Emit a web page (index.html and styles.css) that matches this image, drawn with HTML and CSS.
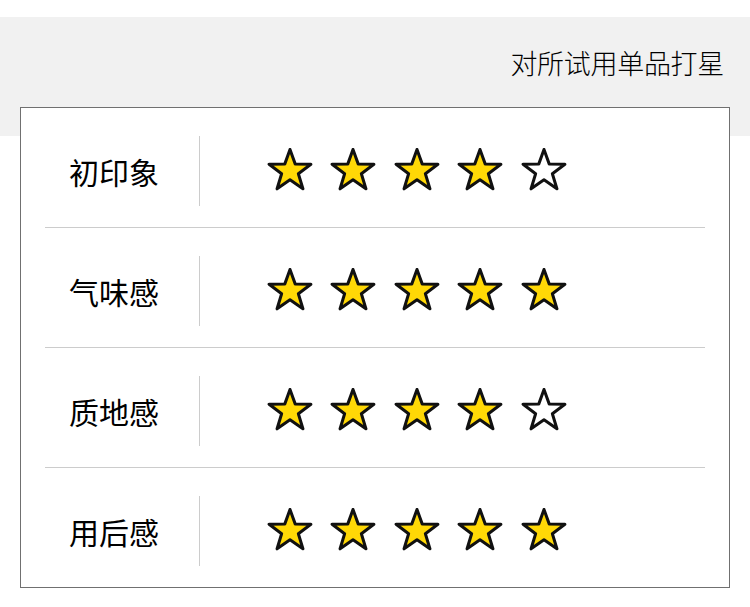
FILE: index.html
```html
<!DOCTYPE html>
<html lang="zh-CN">
<head>
<meta charset="utf-8">
<link rel="stylesheet" href="styles.css">
</head>
<body>
<svg width="0" height="0" class="defs">
  <defs>
    <polygon id="star" points="24,1.5 29.17,15.88 44.92,16.2 32.37,25.72 36.93,40.8 24,31.8 11.07,40.8 15.63,25.72 3.08,16.2 18.83,15.88"/>
  </defs>
</svg>
<div class="band">
  <div class="title">对所试用单品打星</div>
</div>
<div class="card">
  <div class="row">
    <div class="label">初印象</div>
    <div class="stars">
      <svg class="star on" viewBox="0 0 48 46"><use href="#star"/></svg>
      <svg class="star on" viewBox="0 0 48 46"><use href="#star"/></svg>
      <svg class="star on" viewBox="0 0 48 46"><use href="#star"/></svg>
      <svg class="star on" viewBox="0 0 48 46"><use href="#star"/></svg>
      <svg class="star off" viewBox="0 0 48 46"><use href="#star"/></svg>
    </div>
  </div>
  <div class="row">
    <div class="label">气味感</div>
    <div class="stars">
      <svg class="star on" viewBox="0 0 48 46"><use href="#star"/></svg>
      <svg class="star on" viewBox="0 0 48 46"><use href="#star"/></svg>
      <svg class="star on" viewBox="0 0 48 46"><use href="#star"/></svg>
      <svg class="star on" viewBox="0 0 48 46"><use href="#star"/></svg>
      <svg class="star on" viewBox="0 0 48 46"><use href="#star"/></svg>
    </div>
  </div>
  <div class="row">
    <div class="label">质地感</div>
    <div class="stars">
      <svg class="star on" viewBox="0 0 48 46"><use href="#star"/></svg>
      <svg class="star on" viewBox="0 0 48 46"><use href="#star"/></svg>
      <svg class="star on" viewBox="0 0 48 46"><use href="#star"/></svg>
      <svg class="star on" viewBox="0 0 48 46"><use href="#star"/></svg>
      <svg class="star off" viewBox="0 0 48 46"><use href="#star"/></svg>
    </div>
  </div>
  <div class="row">
    <div class="label">用后感</div>
    <div class="stars">
      <svg class="star on" viewBox="0 0 48 46"><use href="#star"/></svg>
      <svg class="star on" viewBox="0 0 48 46"><use href="#star"/></svg>
      <svg class="star on" viewBox="0 0 48 46"><use href="#star"/></svg>
      <svg class="star on" viewBox="0 0 48 46"><use href="#star"/></svg>
      <svg class="star on" viewBox="0 0 48 46"><use href="#star"/></svg>
    </div>
  </div>
</div>
</body>
</html>
```
FILE: styles.css
```css
html, body {
  margin: 0;
  padding: 0;
  background: #ffffff;
  font-family: "Noto Sans CJK SC", "Noto Sans", sans-serif;
  color: #111111;
}
.defs {
  display: block;
  width: 0;
  height: 0;
  overflow: hidden;
}
.band {
  margin-top: 17px;
  height: 119px;
  background: #f1f1f1;
  box-sizing: border-box;
  padding: 28px 26px 0 0;
}
.title {
  text-align: right;
  font-size: 27px;
  line-height: 36px;
  letter-spacing: -0.3px;
  font-weight: 300;
  color: #000000;
}
.card {
  margin: -29px 20px 0 20px;
  background: #ffffff;
  border: 1px solid #707070;
  padding: 0 24px;
}
.row {
  display: flex;
  align-items: center;
  padding: 28px 0 21px 0;
  border-bottom: 1px solid #cccccc;
}
.row:last-child {
  border-bottom: none;
}
.label {
  width: 130px;
  height: 70px;
  padding-left: 24px;
  display: flex;
  align-items: center;
  border-right: 1px solid #cccccc;
  font-size: 30px;
  line-height: 40px;
  color: #000000;
}
.stars {
  display: flex;
  gap: 15.5px;
  padding-left: 65.5px;
}
.star {
  width: 48px;
  height: 46px;
  display: block;
}
.star use {
  stroke: #111111;
  stroke-width: 3;
  stroke-linejoin: round;
}
.star.on use {
  fill: #ffd806;
}
.star.off use {
  fill: #ffffff;
}
```
